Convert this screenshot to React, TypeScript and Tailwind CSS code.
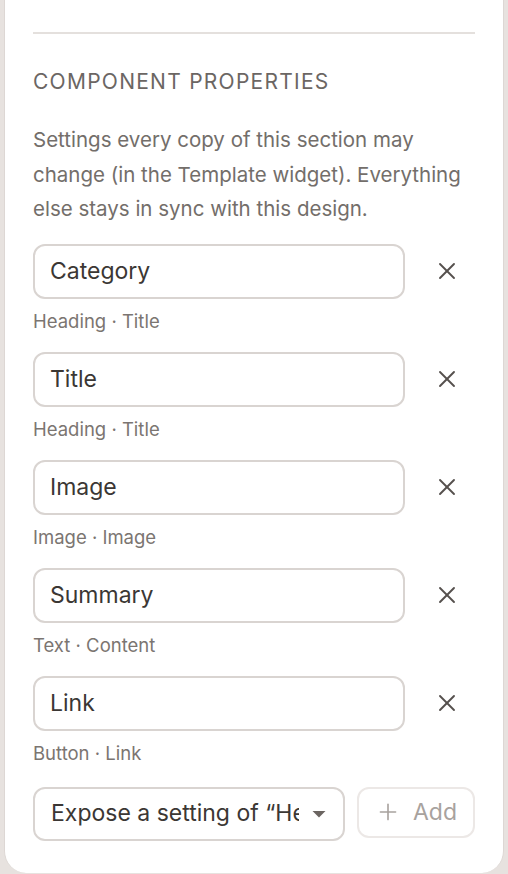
import { X, Plus } from 'lucide-react';

const props = [
  { name: 'Category', meta: 'Heading · Title' },
  { name: 'Title', meta: 'Heading · Title' },
  { name: 'Image', meta: 'Image · Image' },
  { name: 'Summary', meta: 'Text · Content' },
  { name: 'Link', meta: 'Button · Link' },
];

export default function App() {
  return (
    <div className="min-h-screen bg-[#e7e2df] px-1 font-['Inter',sans-serif]">
      <div className="bg-white border-x border-[#ddd7d4] rounded-b-[22px] px-7 pt-8 h-[873px]">
        {/* Divider */}
        <div className="h-[2px] bg-[#e4e0dd]" />

        {/* Header */}
        <h2 className="mt-[36px] text-[21px] leading-[24px] tracking-[0.06em] text-[#6b6663] font-normal">
          COMPONENT PROPERTIES
        </h2>
        <p className="mt-[29px] text-[20.5px] leading-[34.5px] text-[#736e6a]">
          Settings every copy of this section may change (in the Template widget). Everything else stays in sync with this design.
        </p>

        {/* Property rows */}
        <div className="mt-[17px] flex flex-col gap-[20px]">
          {props.map((p) => (
            <div key={p.name}>
              <div className="flex items-center">
                <div className="w-[372px] h-[55px] border-2 border-[#d9d4d1] rounded-[12px] flex items-center pl-[15px] text-[23px] text-[#3b3734]">
                  {p.name}
                </div>
                <button className="ml-[20px] w-[44px] h-[44px] flex items-center justify-center text-[#55504d]">
                  <X size={28} strokeWidth={1.6} />
                </button>
              </div>
              <div className="mt-[11px] text-[18.5px] leading-[22px] text-[#7b7571]">{p.meta}</div>
            </div>
          ))}
        </div>

        {/* Add row */}
        <div className="mt-[23px] flex items-start gap-3">
          <div className="w-[312px] h-[54px] border-2 border-[#d9d4d1] rounded-[12px] flex items-center pl-[16px] pr-[16px] text-[23px] text-[#3b3734]">
            <span className="flex-1 min-w-0 overflow-hidden whitespace-nowrap">Expose a setting of “Heading”</span>
            <svg width="16" height="10" viewBox="0 0 16 10" className="ml-[12px] shrink-0">
              <path d="M1.5 2 L14.5 2 L8 8.5 Z" fill="#6b6561" />
            </svg>
          </div>
          <button className="w-[120px] h-[51px] border-2 border-[#ece8e6] rounded-[12px] flex items-center justify-center gap-[12px] text-[23px] text-[#a8a29e]">
            <Plus size={26} strokeWidth={1.5} />
            <span>Add</span>
          </button>
        </div>
      </div>
    </div>
  );
}
